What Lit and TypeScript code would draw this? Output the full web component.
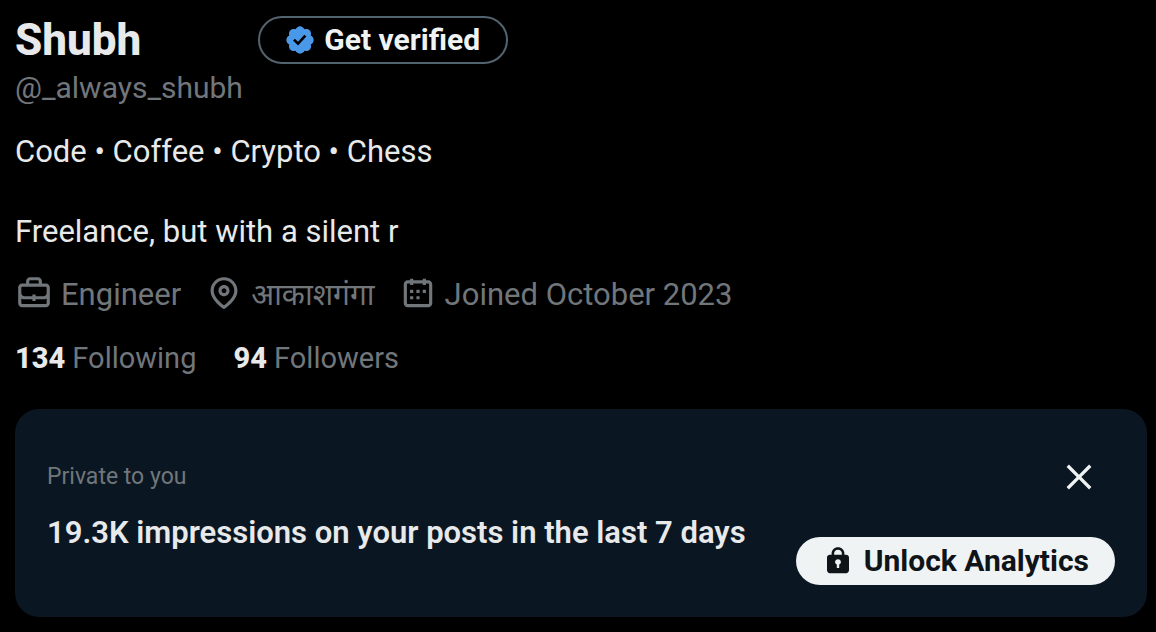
import { LitElement, html, css } from "lit";
import { customElement, state } from "lit/decorators.js";

const icons = {
  verified: "M20.396 11c-.018-.646-.215-1.275-.57-1.816-.354-.54-.852-.972-1.438-1.246.223-.607.27-1.264.14-1.897-.131-.634-.437-1.218-.882-1.687-.47-.445-1.053-.75-1.687-.882-.633-.13-1.29-.083-1.897.14-.273-.587-.704-1.086-1.245-1.44S11.647 1.62 11 1.604c-.646.017-1.273.213-1.813.568s-.969.854-1.24 1.44c-.608-.223-1.267-.272-1.902-.14-.635.13-1.22.436-1.69.882-.445.47-.749 1.055-.878 1.688-.13.633-.08 1.29.144 1.896-.587.274-1.087.705-1.443 1.245-.356.54-.555 1.17-.574 1.817.02.647.218 1.276.574 1.817.356.54.856.972 1.443 1.245-.224.606-.274 1.263-.144 1.896.13.634.433 1.218.877 1.688.47.443 1.054.747 1.687.878.633.132 1.29.084 1.897-.136.274.586.705 1.084 1.246 1.439.54.354 1.17.551 1.816.569.647-.016 1.276-.213 1.817-.567s.972-.854 1.245-1.44c.604.239 1.266.296 1.903.164.636-.132 1.22-.447 1.68-.907.46-.46.776-1.044.908-1.681s.075-1.299-.165-1.903c.586-.274 1.084-.705 1.439-1.246.354-.54.551-1.17.569-1.816zM9.662 14.85l-3.429-3.428 1.293-1.302 2.072 2.072 4.4-4.794 1.347 1.246z",
  briefcase: "M19.5 6H17V4.5C17 3.12 15.88 2 14.5 2h-5C8.12 2 7 3.12 7 4.5V6H4.5C3.12 6 2 7.12 2 8.5v10C2 19.88 3.12 21 4.5 21h15c1.38 0 2.5-1.12 2.5-2.5v-10C22 7.12 20.88 6 19.5 6zM9 4.5c0-.28.23-.5.5-.5h5c.28 0 .5.22.5.5V6H9V4.5zm11 14c0 .28-.22.5-.5.5h-15c-.27 0-.5-.22-.5-.5v-3.04c.59.35 1.27.54 2 .54h5v1h2v-1h5c.73 0 1.41-.19 2-.54v3.04zm0-6.49c0 1.1-.9 1.99-2 1.99h-5v-1h-2v1H6c-1.1 0-2-.9-2-2V8.5c0-.28.23-.5.5-.5h15c.28 0 .5.22.5.5v3.51z",
  pin: "M12 7c-1.93 0-3.5 1.57-3.5 3.5S10.07 14 12 14s3.5-1.57 3.5-3.5S13.93 7 12 7zm0 5c-.827 0-1.5-.673-1.5-1.5S11.173 9 12 9s1.5.673 1.5 1.5S12.827 12 12 12zm0-10c-4.687 0-8.5 3.813-8.5 8.5 0 5.967 7.621 11.116 7.945 11.332l.555.37.555-.37c.324-.216 7.945-5.365 7.945-11.332C20.5 5.813 16.687 2 12 2zm0 17.77c-1.665-1.241-6.5-5.196-6.5-9.27C5.5 6.916 8.416 4 12 4s6.5 2.916 6.5 6.5c0 4.073-4.835 8.028-6.5 9.27z",
  calendar: "M7 4V3h2v1h6V3h2v1h1.5C19.89 4 21 5.12 21 6.5v12c0 1.38-1.11 2.5-2.5 2.5h-13C4.12 21 3 19.88 3 18.5v-12C3 5.12 4.12 4 5.5 4H7zm0 2H5.5c-.27 0-.5.22-.5.5v12c0 .28.23.5.5.5h13c.28 0 .5-.22.5-.5v-12c0-.28-.22-.5-.5-.5H17v1h-2V6H9v1H7V6zm0 6h2v-2H7v2zm0 4h2v-2H7v2zm4-4h2v-2h-2v2zm0 4h2v-2h-2v2zm4-4h2v-2h-2v2z",
  close: "M10.59 12L4.54 5.96l1.42-1.42L12 10.59l6.04-6.05 1.42 1.42L13.41 12l6.05 6.04-1.42 1.42L12 13.41l-6.04 6.05-1.42-1.42L10.59 12z",
  lock: "M18.1 7.3H16.8V6.2C16.8 3.6 14.65 1.6 12 1.6S7.2 3.6 7.2 6.2V7.3H5.9C4.7 7.3 3.75 8.25 3.75 9.45V19C3.75 20.2 4.7 21.15 5.9 21.15H18.1C19.3 21.15 20.25 20.2 20.25 19V9.45C20.25 8.25 19.3 7.3 18.1 7.3zM9.1 6.2C9.1 4.65 10.4 3.5 12 3.5s2.9 1.15 2.9 2.7V7.3H9.1V6.2zM12.9 14.7V17.3H11.1V14.7C10.3 14.35 9.8 13.65 9.8 12.8C9.8 11.6 10.8 10.7 12 10.7S14.2 11.6 14.2 12.8C14.2 13.65 13.7 14.35 12.9 14.7z",
};

const icon = (name: keyof typeof icons, size = 24) => html`
  <svg class="icon ${name}" viewBox="0 0 ${size} ${size}" aria-hidden="true">
    <path d=${icons[name]}></path>
  </svg>
`;

@customElement("app-root")
export class AppRoot extends LitElement {
  @state() private analyticsOpen = true;

  static styles = css`
    :host {
      display: block;
      box-sizing: border-box;
      min-height: 100vh;
      padding: 15px 9px 15px 15px;
      background: #000;
      color: #e7e9ea;
      font-family: Roboto, "Noto Sans", sans-serif;
      font-size: 31px;
      line-height: 40px;
    }
    h1, h2, p, ul { margin: 0; padding: 0; }
    button {
      display: flex;
      align-items: center;
      font: inherit;
      font-size: 30px;
      font-weight: 700;
      cursor: pointer;
    }
    a { color: inherit; text-decoration: none; }
    .icon { display: block; flex: none; fill: currentColor; width: 38px; height: 38px; }
    .head { display: flex; align-items: center; gap: 117px; }
    .name { font-size: 44px; line-height: 50px; font-weight: 800; }
    .verify {
      gap: 8px;
      height: 48px;
      padding: 0 26px 0 24px;
      border: 2px solid #536471;
      border-radius: 24px;
      background: #000;
      color: #eff3f4;
    }
    .icon.verified { width: 32px; height: 32px; fill: #4a99e9; }
    .muted { color: #71767b; }
    .handle { margin-top: 3px; font-size: 30px; }
    .bio { margin-top: 24px; white-space: pre-line; }
    .facts { display: flex; flex-wrap: wrap; gap: 0 24px; margin-top: 22px; list-style: none; }
    .facts li { display: flex; align-items: flex-end; gap: 8px; }
    .facts .icon { margin-bottom: 3px; }
    .facts span { font-size: 30px; }
    .counts { display: flex; gap: 37px; margin-top: 23px; font-size: 29px; }
    .counts strong { color: #e7e9ea; font-weight: 800; }
    .card {
      display: flex;
      justify-content: space-between;
      margin-top: 31px;
      padding: 48px 32px 32px;
      border-radius: 24px;
      background: #0a1621;
    }
    .note { font-size: 23px; }
    .impressions { margin-top: 16px; font-size: 31px; line-height: 40px; font-weight: 600; }
    .actions { display: flex; flex-direction: column; align-items: flex-end; gap: 40px; }
    .dismiss { padding: 0; margin-right: 16px; border: 0; background: none; color: #eff3f4; }
    .icon.close { width: 40px; height: 40px; }
    .unlock {
      gap: 10px;
      height: 48px;
      padding: 0 26px;
      border: 0;
      border-radius: 24px;
      background: #eff3f4;
      color: #0f1419;
    }
    .icon.lock { width: 32px; height: 32px; }
  `;

  render() {
    return html`
      <main>
        <div class="head">
          <h1 class="name">Shubh</h1>
          <button class="verify" type="button">${icon("verified", 22)}Get verified</button>
        </div>
        <p class="handle muted">@_always_shubh</p>
        <p class="bio">${"Code • Coffee • Crypto • Chess\n\nFreelance, but with a silent r"}</p>
        <ul class="facts muted">
          <li>${icon("briefcase")}Engineer</li>
          <li>${icon("pin")}<span lang="hi">आकाशगंगा</span></li>
          <li>${icon("calendar")}Joined October 2023</li>
        </ul>
        <div class="counts muted">
          <a href="#following"><strong>134</strong> Following</a>
          <a href="#followers"><strong>94</strong> Followers</a>
        </div>
        ${this.analyticsOpen
          ? html`<section class="card">
              <div>
                <p class="note muted">Private to you</p>
                <h2 class="impressions">19.3K impressions on your posts in the last 7 days</h2>
              </div>
              <div class="actions">
                <button class="dismiss" type="button" aria-label="Close" @click=${() => (this.analyticsOpen = false)}>
                  ${icon("close")}
                </button>
                <button class="unlock" type="button">${icon("lock")}Unlock Analytics</button>
              </div>
            </section>`
          : null}
      </main>
    `;
  }
}
